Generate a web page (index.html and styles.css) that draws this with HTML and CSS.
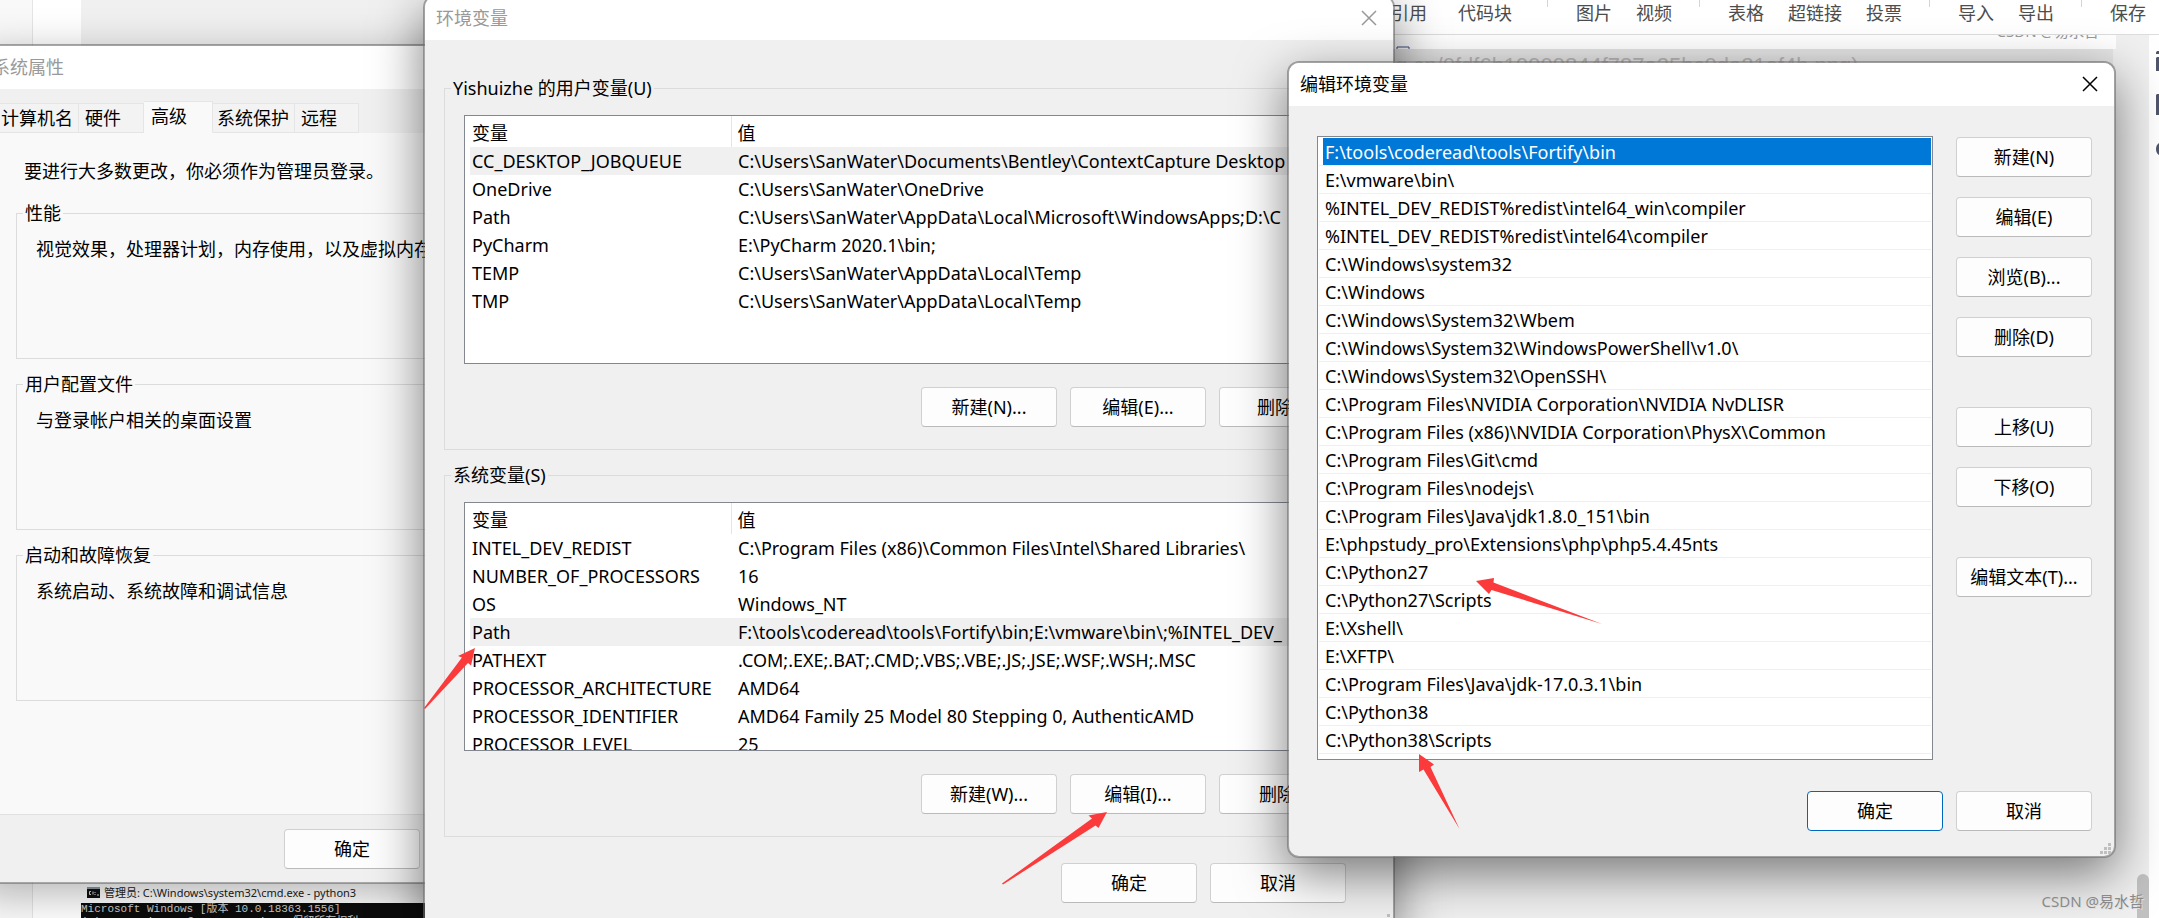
FILE: index.html
```
<!DOCTYPE html>
<html lang="zh-CN">
<head>
<meta charset="utf-8">
<title>编辑环境变量</title>
<link rel="stylesheet" href="styles.css">
</head>
<body>
<div class="desktop">

  <div class="backdrop">
    <div class="gutter"></div>
    <div class="strip"></div>
    <div class="viewer">
      <div class="console">
        <div class="console-title">
          <svg width="13" height="11" viewBox="0 0 13 11"><rect width="13" height="11" fill="#8b9aa8"/><rect x="0" y="2" width="13" height="9" fill="#111"/><path d="M4 4.500H2.500V7.500H4M6 4.500V7.500M8 5v1M8 7v1M10 8h2" stroke="#ddd" fill="none"/></svg>
          <span>管理员: C:\Windows\system32\cmd.exe - python3</span>
        </div>
        <div class="console-body">Microsoft Windows [版本 10.0.18363.1556]<br>(c) 2019 Microsoft Corporation. 保留所有权利。</div>
      </div>
    </div>
    <div class="editor">
      <nav class="toolbar">
        <span>引用</span><span class="wide">代码块</span><i></i><span>图片</span><span>视频</span><i></i><span>表格</span><span>超链接</span><span>投票</span><i></i><span>导入</span><span>导出</span><i></i><span>保存</span>
      </nav>
      <div class="editor-main">
        <div class="source">
          <div class="preview-edge">
            <svg width="14" height="3" viewBox="0 0 14 3"><path d="M1 3V1H13V3" fill="none" stroke="#3d4f86" stroke-width="1"/></svg>
            <span>CSDN @易水哲</span>
          </div>
          <div class="code-line">g.cn/0fdf6b19909844f787a25bc0da21af4b.png)</div>
        </div>
        <div class="track"><div class="thumb"></div></div>
        <div class="side">
          <svg width="3" height="110" viewBox="0 0 3 110" fill="#50556b"><path d="M0 3.500L1 2H3V5H0ZM1 8H3V22H0V9ZM1 45H3V66H0V46ZM3 94V106Q0 104 0 100Q0 96 3 94Z"/></svg>
        </div>
      </div>
    </div>
  </div>

  <section class="window sysprops">
    <header class="titlebar">系统属性</header>
    <div class="tabs">
      <button class="tab first" type="button">计算机名</button>
      <button class="tab hardware" type="button">硬件</button>
      <button class="tab active" type="button">高级</button>
      <button class="tab protect" type="button">系统保护</button>
      <button class="tab remote" type="button">远程</button>
    </div>
    <div class="pane">
      <p class="note">要进行大多数更改，你必须作为管理员登录。</p>
      <fieldset><legend>性能</legend><p>视觉效果，处理器计划，内存使用，以及虚拟内存</p></fieldset>
      <fieldset><legend>用户配置文件</legend><p>与登录帐户相关的桌面设置</p></fieldset>
      <fieldset><legend>启动和故障恢复</legend><p>系统启动、系统故障和调试信息</p></fieldset>
    </div>
    <footer class="actions"><button class="btn" type="button">确定</button></footer>
  </section>

  <section class="window envvars">
    <header class="titlebar">
      <span>环境变量</span>
      <button class="close" type="button" aria-label="关闭"><svg width="16" height="16" viewBox="0 0 16 16"><path d="M1 1L15 15M15 1L1 15"/></svg></button>
    </header>
    <div class="env-body">
      <fieldset>
        <legend>Yishuizhe 的用户变量(U)</legend>
        <div class="listview">
          <table>
            <thead><tr><th>变量</th><th>值</th></tr></thead>
            <tbody>
              <tr class="marked"><td>CC_DESKTOP_JOBQUEUE</td><td>C:\Users\SanWater\Documents\Bentley\ContextCapture Desktop</td></tr>
              <tr><td>OneDrive</td><td>C:\Users\SanWater\OneDrive</td></tr>
              <tr><td>Path</td><td>C:\Users\SanWater\AppData\Local\Microsoft\WindowsApps;D:\C</td></tr>
              <tr><td>PyCharm</td><td>E:\PyCharm 2020.1\bin;</td></tr>
              <tr><td>TEMP</td><td>C:\Users\SanWater\AppData\Local\Temp</td></tr>
              <tr><td>TMP</td><td>C:\Users\SanWater\AppData\Local\Temp</td></tr>
            </tbody>
          </table>
        </div>
        <div class="row-buttons">
          <button class="btn" type="button">新建(N)...</button>
          <button class="btn" type="button">编辑(E)...</button>
          <button class="btn" type="button">删除(D)</button>
        </div>
      </fieldset>
      <fieldset>
        <legend>系统变量(S)</legend>
        <div class="listview">
          <table>
            <thead><tr><th>变量</th><th>值</th></tr></thead>
            <tbody>
              <tr><td>INTEL_DEV_REDIST</td><td>C:\Program Files (x86)\Common Files\Intel\Shared Libraries\</td></tr>
              <tr><td>NUMBER_OF_PROCESSORS</td><td>16</td></tr>
              <tr><td>OS</td><td>Windows_NT</td></tr>
              <tr class="marked"><td>Path</td><td>F:\tools\coderead\tools\Fortify\bin;E:\vmware\bin\;%INTEL_DEV_</td></tr>
              <tr><td>PATHEXT</td><td>.COM;.EXE;.BAT;.CMD;.VBS;.VBE;.JS;.JSE;.WSF;.WSH;.MSC</td></tr>
              <tr><td>PROCESSOR_ARCHITECTURE</td><td>AMD64</td></tr>
              <tr><td>PROCESSOR_IDENTIFIER</td><td>AMD64 Family 25 Model 80 Stepping 0, AuthenticAMD</td></tr>
              <tr><td>PROCESSOR_LEVEL</td><td>25</td></tr>
            </tbody>
          </table>
        </div>
        <div class="row-buttons">
          <button class="btn" type="button">新建(W)...</button>
          <button class="btn" type="button">编辑(I)...</button>
          <button class="btn" type="button">删除(L)</button>
        </div>
      </fieldset>
      <footer class="actions">
        <button class="btn" type="button">确定</button>
        <button class="btn" type="button">取消</button>
      </footer>
    </div>
    <svg class="grip" width="12" height="12" viewBox="0 0 12 12"><path d="M8 0h3v3h-3zM4 4h3v3h-3zM8 4h3v3h-3zM0 8h3v3h-3zM4 8h3v3h-3zM8 8h3v3h-3z"/></svg>
  </section>

  <section class="window editvar">
    <header class="titlebar">
      <span>编辑环境变量</span>
      <button class="close" type="button" aria-label="关闭"><svg width="16" height="16" viewBox="0 0 16 16"><path d="M1 1L15 15M15 1L1 15"/></svg></button>
    </header>
    <div class="edit-body">
      <ul class="paths">
        <li class="selected"><span>F:\tools\coderead\tools\Fortify\bin</span></li>
        <li><span>E:\vmware\bin\</span></li>
        <li><span>%INTEL_DEV_REDIST%redist\intel64_win\compiler</span></li>
        <li><span>%INTEL_DEV_REDIST%redist\intel64\compiler</span></li>
        <li><span>C:\Windows\system32</span></li>
        <li><span>C:\Windows</span></li>
        <li><span>C:\Windows\System32\Wbem</span></li>
        <li><span>C:\Windows\System32\WindowsPowerShell\v1.0\</span></li>
        <li><span>C:\Windows\System32\OpenSSH\</span></li>
        <li><span>C:\Program Files\NVIDIA Corporation\NVIDIA NvDLISR</span></li>
        <li><span>C:\Program Files (x86)\NVIDIA Corporation\PhysX\Common</span></li>
        <li><span>C:\Program Files\Git\cmd</span></li>
        <li><span>C:\Program Files\nodejs\</span></li>
        <li><span>C:\Program Files\Java\jdk1.8.0_151\bin</span></li>
        <li><span>E:\phpstudy_pro\Extensions\php\php5.4.45nts</span></li>
        <li><span>C:\Python27</span></li>
        <li><span>C:\Python27\Scripts</span></li>
        <li><span>E:\Xshell\</span></li>
        <li><span>E:\XFTP\</span></li>
        <li><span>C:\Program Files\Java\jdk-17.0.3.1\bin</span></li>
        <li><span>C:\Python38</span></li>
        <li><span>C:\Python38\Scripts</span></li>
      </ul>
      <div class="commands">
        <button class="btn" type="button">新建(N)</button>
        <button class="btn" type="button">编辑(E)</button>
        <button class="btn" type="button">浏览(B)...</button>
        <button class="btn" type="button">删除(D)</button>
        <button class="btn apart" type="button">上移(U)</button>
        <button class="btn" type="button">下移(O)</button>
        <button class="btn apart" type="button">编辑文本(T)...</button>
      </div>
    </div>
    <footer class="actions">
      <button class="btn default" type="button">确定</button>
      <button class="btn" type="button">取消</button>
    </footer>
    <svg class="grip" width="12" height="12" viewBox="0 0 12 12"><path d="M8 0h3v3h-3zM4 4h3v3h-3zM8 4h3v3h-3zM0 8h3v3h-3zM4 8h3v3h-3zM8 8h3v3h-3z"/></svg>
  </section>

  <svg class="arrows" width="2159" height="918" viewBox="0 0 2159 918">
    <path d="M475 648L458 656L462 657.500L424 708L425 709L468 663L471 665.500Z"/>
    <path d="M1107 812L1088.500 815.500L1092 818.500L1002 883.500L1003 884.500L1095.500 825.500L1098.500 828Z"/>
    <path d="M1476 581L1494 578L1493.500 582.500L1602 624L1491.500 590L1489 594Z"/>
    <path d="M1419 754L1434 764.500L1430.500 767L1459.500 829L1423.500 769.500L1419 772Z"/>
  </svg>

  <div class="watermark">CSDN @易水哲</div>
</div>
</body>
</html>
```

FILE: styles.css
```
* { box-sizing: border-box; }

body {
  margin: 0;
  font-family: "Noto Sans", "Noto Sans CJK SC", sans-serif;
  font-size: 18px;
  line-height: 26px;
  color: #000;
}

p, ul, fieldset { margin: 0; padding: 0; }
button { font: inherit; color: inherit; padding: 0; white-space: nowrap; }

.desktop {
  position: relative;
  height: 100vh;
  overflow: hidden;
  background: #f0f0f0;
}

/* applications behind the dialogs */
.backdrop { display: flex; height: 100%; }
.gutter { width: 33px; background: #f9f9f9; border-right: 1px solid #e5e5e5; }
.strip { width: 48px; background: #fff; }
.viewer { flex: 1; display: flex; flex-direction: column; justify-content: flex-end; }
.console-title {
  display: flex;
  gap: 4px;
  align-items: center;
  height: 21px;
  padding-left: 6px;
  font-size: 11px;
  line-height: 16px;
  background: #fff;
  color: #222;
}
.console-body {
  height: 15px;
  overflow: hidden;
  background: #0c0c0c;
  color: #ccc;
  font-family: "Liberation Mono", "Noto Sans CJK SC", monospace;
  font-size: 11px;
  line-height: 13px;
}

.editor { width: 800px; display: flex; flex-direction: column; }
.toolbar {
  display: flex;
  justify-content: flex-end;
  gap: 24px;
  height: 35px;
  padding: 0 13px 0 0;
  background: #fff;
  border-bottom: 1px solid #ddd;
  color: #4d4d4d;
  white-space: nowrap;
}
.toolbar i { width: 1px; height: 7px; margin: 0 4px 0 3px; background: #d5d5d5; }
.toolbar .wide { padding: 0 8px 0 7px; }
.editor-main { flex: 1; display: flex; }
.source { flex: 1; }
.preview-edge {
  display: flex;
  justify-content: space-between;
  align-items: flex-end;
  height: 14px;
  padding: 0 17px 0 37px;
  background: #fff;
  overflow: hidden;
}
.preview-edge span {
  align-self: flex-start;
  height: 5px;
  display: flex;
  align-items: flex-end;
  overflow: hidden;
  font-size: 15px;
  line-height: 18px;
  color: #999;
}
.code-line {
  height: 32px;
  margin-right: 3px;
  padding-left: 36px;
  background: #e4e4e4;
  color: #b8b4b4;
  font-size: 22px;
  line-height: 34px;
  font-family: "Liberation Sans", sans-serif;
}
.track {
  display: flex;
  align-items: flex-end;
  justify-content: flex-end;
  width: 33px;
}
.thumb { width: 12px; height: 44px; border-radius: 6px 6px 0 0; background: #c1c1c1; }
.side { width: 10px; padding: 14px 0 0 7px; background: #fff; }
.side svg { display: block; }

/* dialogs */
.window {
  position: absolute;
  display: flex;
  flex-direction: column;
  background: #f0f0f0;
  background-clip: padding-box;
  border: 2px solid rgba(110, 110, 110, .6);
  border-radius: 12px;
  box-shadow: 0 16px 50px rgba(0, 0, 0, .5);
}
.titlebar {
  display: flex;
  align-items: center;
  justify-content: space-between;
  flex: none;
  height: 43px;
  padding: 0 16px 2px 11px;
  background: #fff;
  border-radius: 10px 10px 0 0;
}
.close { display: flex; border: 0; background: none; }
.close path { fill: none; stroke: currentColor; stroke-width: 1.500; }
.btn {
  width: 136px;
  height: 40px;
  background: #fdfdfd;
  border: 1px solid #d0d0d0;
  border-bottom-color: #bababa;
  border-radius: 4px;
}
.btn.default { border-color: #0067c0; }
.actions { display: flex; justify-content: flex-end; gap: 13px; }
.grip { position: absolute; right: 2px; bottom: 1px; fill: #bfbfbf; }

fieldset { border: 1px solid #dcdcdc; min-width: 0; }
legend { margin-left: 6px; padding: 0 2px; line-height: 26px; }

.sysprops {
  left: -22px;
  top: 44px;
  width: 760px;
  height: 840px;
  border-radius: 0;
  box-shadow: 0 10px 40px rgba(0, 0, 0, .3);
}
.sysprops .titlebar { color: #999; border-radius: 0; padding-left: 12px; }
.tabs { display: flex; align-items: flex-end; height: 44px; padding-left: 12px; }
.tab {
  height: 30px;
  text-align: left;
  background: #f3f3f3;
  border: 1px solid #e5e5e5;
  border-left-width: 0;
}
.tab.first { width: 87px; padding-left: 8px; border-left-width: 1px; }
.tab.hardware { width: 65px; padding-left: 6px; }
.tab.active {
  width: 69px;
  height: 32px;
  padding: 0 0 3px 7px;
  background: #f9f9f9;
  border-bottom-color: #f9f9f9;
}
.tab.protect { width: 82px; padding-left: 4px; }
.tab.remote { width: 64px; padding-left: 6px; }
.pane {
  flex: 1;
  display: flex;
  flex-direction: column;
  gap: 12px;
  padding: 25px 20px 0 36px;
  background: #f9f9f9;
  border-bottom: 1px solid #e0e0e0;
}
.pane .note { padding: 0 0 4px 8px; }
.pane fieldset { height: 159px; }
.pane fieldset p { padding: 10px 0 0 19px; white-space: nowrap; }
.sysprops .actions { padding: 14px 316px 13px 0; }

.envvars {
  left: 423px;
  top: -5px;
  width: 972px;
  height: 934px;
}
.envvars .titlebar { color: #999; height: 43px; }
.env-body { padding: 35px 19px 0; }
.env-body fieldset { height: 375px; padding: 14px 18px 0 19px; margin-bottom: 12px; }
.env-body legend { margin-left: -13px; }
.listview {
  height: 249px;
  padding: 0 2px 0 5px;
  background: #fff;
  border: 1px solid #828790;
  overflow: hidden;
}
.listview table {
  width: 100%;
  table-layout: fixed;
  border-collapse: collapse;
  font-weight: 400;
}
.listview th {
  height: 31px;
  padding: 2px 0 0 6px;
  text-align: left;
  font-weight: 400;
  line-height: 26px;
}
.listview th:first-child { width: 261px; padding-left: 2px; border-right: 1px solid #e5e5e5; }
.listview td {
  height: 28px;
  padding: 0 0 0 7px;
  line-height: 28px;
  white-space: nowrap;
  overflow: hidden;
}
.listview td:first-child { padding-left: 2px; }
.listview .marked { background: #f0f0f0; }
.row-buttons { display: flex; justify-content: flex-end; gap: 13px; padding-top: 23px; }
.env-body .actions { padding: 14px 28px 0 0; }

.editvar { left: 1287px; top: 61px; width: 829px; }
.edit-body { display: flex; gap: 23px; padding: 30px 22px 0 28px; }
.paths {
  flex: 1;
  height: 624px;
  padding: 1px;
  list-style: none;
  background: #fff;
  border: 1px solid #828790;
  overflow: hidden;
}
.paths li {
  height: 28px;
  padding-left: 4px;
  border-bottom: 1px solid #efefef;
  white-space: nowrap;
}
.paths span { display: block; padding: 2px 0 0 2px; line-height: 25px; }
.paths .selected span { background: #0078d7; color: #fff; }
.commands { display: flex; flex-direction: column; gap: 20px; padding-top: 1px; }
.commands .apart { margin-top: 30px; }
.editvar .actions { padding: 31px 22px 25px 0; }

.arrows { position: absolute; left: 0; top: 0; fill: #fb3b3b; pointer-events: none; }
.watermark {
  position: absolute;
  right: 15px;
  bottom: 6px;
  font-size: 15px;
  line-height: 22px;
  color: #8a8a8a;
  text-shadow: 1px 1px 0 #ddd;
}
```
